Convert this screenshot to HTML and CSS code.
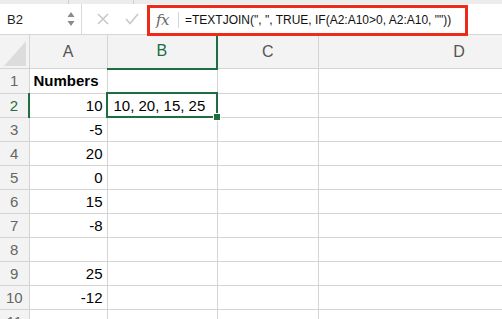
FILE: index.html
```html
<!DOCTYPE html>
<html>
    <head>
        <meta charset="UTF-8">
        <title>TEXTJOIN</title>
        <link rel="stylesheet" href="styles.css">
    </head>
    <body>
        <div class="strip">
            <span class="strip-div one"></span>
            <span class="strip-div two"></span>
        </div>
        <div class="fbar">
            <div class="namebox">
                <span class="cellref">B2</span>
                <svg class="spin" width="8" height="16" viewBox="0 0 8 16">
                    <path d="M4 1 L7.5 6 L0.5 6 Z" fill="#8a8a8a"/>
                    <path d="M4 15 L7.5 10 L0.5 10 Z" fill="#8a8a8a"/>
                </svg>
            </div>
            <div class="actions">
                <svg width="12" height="12" viewBox="0 0 12 12">
                    <path d="M1 1 L11 11 M11 1 L1 11" stroke="#c9c9c9" stroke-width="1.6" fill="none"/>
                </svg>
                <svg width="14" height="12" viewBox="0 0 14 12">
                    <path d="M1 6 L5 10.5 L13 1" stroke="#c9c9c9" stroke-width="1.6" fill="none"/>
                </svg>
            </div>
            <div class="formula">
                <span class="fx">fx</span>
                <span class="fsep"></span>
                <span class="ftext">=TEXTJOIN(", ", TRUE, IF(A2:A10&gt;0, A2:A10, ""))</span>
            </div>
        </div>
        <table class="sheet">
            <colgroup>
                <col class="c-rh"><col class="c-a"><col class="c-b"><col class="c-c"><col class="c-d">
            </colgroup>
            <tr class="hdr">
                <th class="corner"><svg width="28" height="33" viewBox="0 0 28 33"><path d="M26 6 L26 31 L4 31 Z" fill="#dcdcdc"/></svg></th>
                <th>A</th><th class="sel">B</th><th>C</th><th>D</th>
            </tr>
            <tr><th>1</th><td class="bold">Numbers</td><td></td><td></td><td></td></tr>
            <tr><th class="sel">2</th><td class="num">10</td><td class="active">10, 20, 15, 25<span class="handle"></span></td><td></td><td></td></tr>
            <tr><th>3</th><td class="num">-5</td><td></td><td></td><td></td></tr>
            <tr><th>4</th><td class="num">20</td><td></td><td></td><td></td></tr>
            <tr><th>5</th><td class="num">0</td><td></td><td></td><td></td></tr>
            <tr><th>6</th><td class="num">15</td><td></td><td></td><td></td></tr>
            <tr><th>7</th><td class="num">-8</td><td></td><td></td><td></td></tr>
            <tr><th>8</th><td class="num"></td><td></td><td></td><td></td></tr>
            <tr><th>9</th><td class="num">25</td><td></td><td></td><td></td></tr>
            <tr><th>10</th><td class="num">-12</td><td></td><td></td><td></td></tr>
            <tr><th>11</th><td></td><td></td><td></td><td></td></tr>
        </table>
    </body>
</html>
```

FILE: styles.css
```css
body {
    margin:0;
    width:502px;
    height:319px;
    overflow:hidden;
    background:#fff;
    font-family:"Liberation Sans", Arial, sans-serif;
}
.strip {
    height:4px;
    background:#ececec;
    position:relative;
}
.strip-div {
    position:absolute;
    top:0;
    width:1px;
    height:4px;
    background:#cfcfcf;
}
.strip-div.one {left:68px;}
.strip-div.two {left:133px;}
.fbar {
    display:flex;
    align-items:center;
    height:30px;
    background:#fff;
    border-bottom:1px solid #d6d6d6;
}
.namebox {
    display:flex;
    align-items:center;
    justify-content:space-between;
    width:82px;
    height:100%;
    padding-left:7px;
    padding-right:6px;
    border-right:1px solid #dadada;
    box-sizing:border-box;
}
.cellref {
    font-size:13px;
    color:#222;
}
.actions {
    display:flex;
    align-items:center;
    gap:16px;
    width:65px;
    padding-left:15px;
    box-sizing:border-box;
}
.formula {
    display:flex;
    align-items:center;
    width:321px;
    height:31px;
    margin-top:2px;
    border:3px solid #ee2a1b;
    box-sizing:border-box;
}
.fx {
    font-family:"DejaVu Serif", "Liberation Serif", serif;
    font-style:italic;
    font-size:15px;
    color:#666;
    margin-left:6px;
    letter-spacing:-0.5px;
}
.fsep {
    width:1px;
    height:16px;
    background:#d4d4d4;
    margin:0 6px 0 9px;
}
.ftext {
    font-size:12px;
    color:#111;
    white-space:nowrap;
}
.sheet {
    border-collapse:collapse;
    table-layout:fixed;
    width:600px;
}
.c-rh {width:29px;}
.c-a {width:78px;}
.c-b {width:110px;}
.c-c {width:101px;}
.c-d {width:282px;}
.sheet th, .sheet td {
    border:1px solid #d4d4d4;
    height:23px;
    padding:0;
    font-weight:normal;
}
.sheet th {
    background:#f3f3f3;
    color:#666;
    font-size:15px;
    text-align:center;
}
.hdr th {
    height:32px;
    border-top:none;
    font-size:16px;
    color:#555;
}
.hdr th.sel {
    color:#1e6e42;
    border-bottom:2px solid #1e6e42;
}
.corner {
    padding:0;
    line-height:0;
}
.sheet tr > th:first-child {border-left:none;}
.sheet tr > th.sel {
    color:#1e6e42;
    border-right:2px solid #1e6e42;
}
.sheet td {
    font-size:15px;
    color:#000;
    padding:0 4px;
}
.num {text-align:right;}
.bold {font-weight:bold !important;}
.active {
    position:relative;
    outline:2px solid #1e6e42;
    outline-offset:-1px;
    padding-left:6px !important;
}
.handle {
    position:absolute;
    right:-4px;
    bottom:-4px;
    width:6px;
    height:6px;
    background:#1e6e42;
    border:1px solid #fff;
}
```
